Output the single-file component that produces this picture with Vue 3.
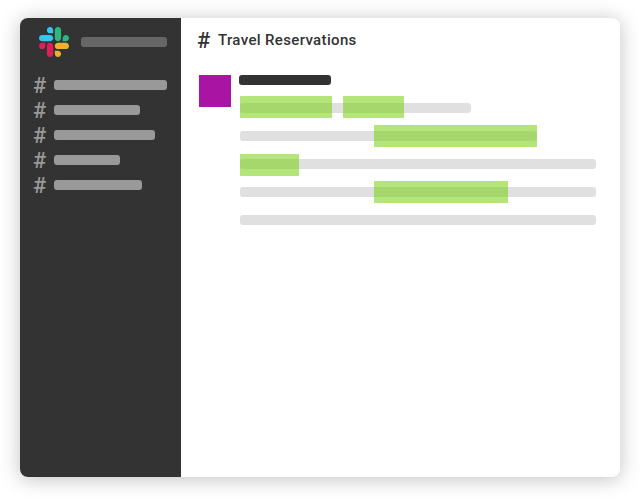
<script setup>
const channels = [113, 86, 101, 66, 88]

const lines = [
  { width: 231, marks: [{ left: 0, top: -7, width: 92 }, { left: 103, top: -7, width: 61 }] },
  { width: 297, marks: [{ left: 134, top: -6, width: 163 }] },
  { width: 356, marks: [{ left: 0, top: -5, width: 59 }] },
  { width: 356, marks: [{ left: 134, top: -6, width: 134 }] },
  { width: 356, marks: [] },
]
</script>

<template>
  <div class="stage">
    <div class="window">
      <aside class="sidebar">
        <div class="brand">
          <svg class="logo" viewBox="0 0 122.8 122.8" aria-hidden="true">
            <path fill="#e01e5a" d="M25.8 77.6c0 7.1-5.8 12.9-12.9 12.9S0 84.7 0 77.6s5.8-12.9 12.9-12.9h12.9v12.9zm6.5 0c0-7.1 5.8-12.9 12.9-12.9s12.9 5.8 12.9 12.9v32.3c0 7.1-5.8 12.9-12.9 12.9s-12.9-5.8-12.9-12.9V77.6z" />
            <path fill="#36c5f0" d="M45.2 25.8c-7.1 0-12.9-5.8-12.9-12.9S38.1 0 45.2 0s12.9 5.8 12.9 12.9v12.9H45.2zm0 6.5c7.1 0 12.9 5.8 12.9 12.9s-5.8 12.9-12.9 12.9H12.9C5.8 58.1 0 52.3 0 45.2s5.8-12.9 12.9-12.9h32.3z" />
            <path fill="#2eb67d" d="M97 45.2c0-7.1 5.8-12.9 12.9-12.9s12.9 5.8 12.9 12.9-5.8 12.9-12.9 12.9H97V45.2zm-6.5 0c0 7.1-5.8 12.9-12.9 12.9s-12.9-5.8-12.9-12.9V12.9C64.7 5.8 70.5 0 77.6 0s12.9 5.8 12.9 12.9v32.3z" />
            <path fill="#ecb22e" d="M77.6 97c7.1 0 12.9 5.8 12.9 12.9s-5.8 12.9-12.9 12.9-12.9-5.8-12.9-12.9V97h12.9zm0-6.5c-7.1 0-12.9-5.8-12.9-12.9s5.8-12.9 12.9-12.9h32.3c7.1 0 12.9 5.8 12.9 12.9s-5.8 12.9-12.9 12.9H77.6z" />
          </svg>
          <span class="workspace"></span>
        </div>
        <ul class="channels">
          <li v-for="(width, i) in channels" :key="i">
            <span class="hash">#</span>
            <span class="channel" :style="{ width: width + 'px' }"></span>
          </li>
        </ul>
      </aside>
      <main class="content">
        <header class="title">
          <span class="hash">#</span>
          <h1>Travel Reservations</h1>
        </header>
        <article class="message">
          <div class="avatar"></div>
          <div class="body">
            <div class="author"></div>
            <div class="lines">
              <div v-for="(line, i) in lines" :key="i" class="line" :style="{ width: line.width + 'px' }">
                <span
                  v-for="(mark, j) in line.marks"
                  :key="j"
                  class="mark"
                  :style="{ left: mark.left + 'px', top: mark.top + 'px', width: mark.width + 'px' }"
                ></span>
              </div>
            </div>
          </div>
        </article>
      </main>
    </div>
  </div>
</template>

<style>
body {
  background: #fff;
}
</style>

<style scoped>
.stage {
  box-sizing: border-box;
  width: 640px;
  height: 499px;
  padding: 18px 20px 22px;
  overflow: hidden;
  font-family: Roboto, "Liberation Sans", sans-serif;
}
.window {
  display: flex;
  height: 459px;
  border-radius: 8px;
  background: #fff;
  box-shadow: 0 2px 20px rgba(0, 0, 0, 0.25);
}
.sidebar {
  box-sizing: border-box;
  width: 161px;
  padding: 9px 14px 0;
  border-radius: 8px 0 0 8px;
  background: #333;
}
.brand {
  display: flex;
  align-items: center;
  gap: 12px;
  height: 30px;
  padding-left: 5px;
}
.logo {
  width: 30px;
  height: 30px;
}
.workspace {
  width: 86px;
  height: 10px;
  border-radius: 3px;
  background: #666;
}
.channels {
  margin: 15px 0 0;
  padding: 0;
  list-style: none;
}
.channels li {
  display: flex;
  align-items: center;
  height: 25px;
  color: #999;
}
.hash {
  flex: none;
  width: 21px;
  margin-left: -1px;
  font-size: 22px;
  font-weight: 500;
  line-height: 25px;
}
.channels .hash {
  padding-top: 1px;
}
.channel {
  height: 10px;
  border-radius: 3px;
  background: #999;
}
.content {
  flex: 1;
  padding: 9px 18px 0;
}
.title {
  display: flex;
  align-items: center;
  height: 26px;
  color: #333;
}
.title .hash {
  width: 21px;
  margin-left: -2px;
}
.title h1 {
  margin: 0;
  font-size: 15px;
  font-weight: 500;
  line-height: 26px;
  letter-spacing: 0.35px;
  white-space: nowrap;
}
.message {
  display: flex;
  gap: 8px;
  margin-top: 22px;
}
.avatar {
  width: 32px;
  height: 32px;
  background: #aa14a2;
}
.author {
  width: 92px;
  height: 10px;
  border-radius: 3px;
  background: #333;
}
.lines {
  display: flex;
  flex-direction: column;
  gap: 18px;
  padding: 18px 0 0 1px;
}
.line {
  position: relative;
  height: 10px;
  border-radius: 3px;
  background: #e0e0e0;
}
.mark {
  position: absolute;
  height: 22px;
  background: rgba(116, 207, 13, 0.55);
}
</style>
